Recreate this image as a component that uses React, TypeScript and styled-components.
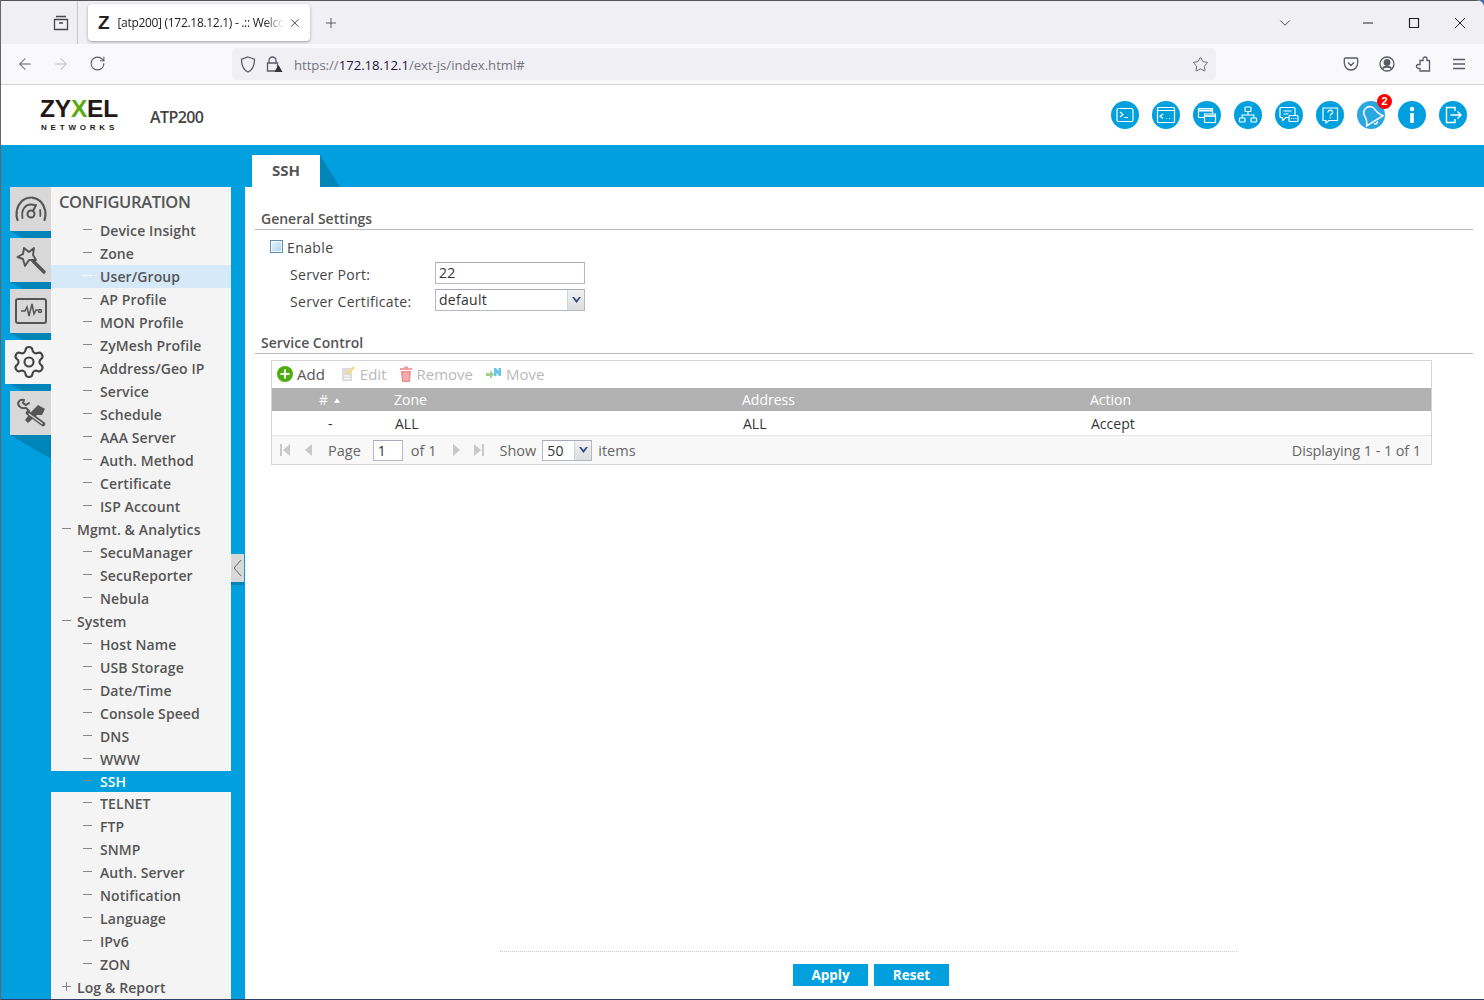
import React from 'react';
import styled, { createGlobalStyle } from 'styled-components';
import { ArrowLeft, ArrowRight, ChevronDown, Plus, RotateCw, Settings, Star, X } from 'lucide-react';

const FONT = `"Open Sans", "Liberation Sans", sans-serif`;
const BLUE = '#00a0df';
const DARK_BLUE = '#0085b9';

const GlobalStyle = createGlobalStyle`
    html, body { margin: 0; padding: 0; background: #3f6fb8; }
    * { box-sizing: border-box; }
`;

const Window = styled.div`
    height: 1000px;
    overflow: hidden;
    display: flex;
    flex-direction: column;
    font-family: ${FONT};
    color: #555;
    background: #fff;
    border-left: 1px solid #666;
    border-bottom: 1px solid #2f3f6a;
    border-top-right-radius: 8px;
`;

const TabStrip = styled.div`
    height: 44px;
    flex: none;
    display: flex;
    align-items: center;
    background: #f0f0f4;
    border-top: 1px solid #555;
    padding-left: 50px;
    color: #45454d;
`;

const ViewButton = styled.div`
    width: 27px;
    height: 43px;
    display: flex;
    align-items: center;
    border-right: 1px solid #c8c8cc;
`;

const BrowserTab = styled.div`
    margin-left: 10px;
    width: 222px;
    height: 37px;
    background: #fff;
    border-radius: 4px;
    box-shadow: 0 1px 3px rgba(0, 0, 0, 0.35);
    display: flex;
    align-items: center;
    padding: 0 8px 0 10px;
`;

const TabFavicon = styled.span`
    width: 20px;
    font: bold 19px "Liberation Sans", sans-serif;
    color: #222;
`;

const TabTitle = styled.span`
    width: 167px;
    flex: none;
    margin-right: 4px;
    white-space: nowrap;
    overflow: hidden;
    font: 12px "Open Sans", sans-serif;
    color: #222;
    letter-spacing: -0.3px;
    mask-image: linear-gradient(to right, #000 88%, transparent);
`;

const NewTab = styled.div`
    margin-left: 13px;
    display: flex;
`;

const StripRight = styled.div`
    margin-left: auto;
    padding-right: 1px;
    display: flex;
    align-items: center;
`;

const CaretSlot = styled.div`
    width: 69px;
    display: flex;
`;

const WindowControl = styled.div`
    width: 46px;
    display: flex;
    justify-content: center;
    color: #222;
`;

const NavBar = styled.div`
    height: 41px;
    flex: none;
    display: flex;
    align-items: center;
    background: #f9f9fb;
    border-bottom: 1px solid #cfcfd4;
    color: #5b5b66;
`;

const NavButton = styled.div<{ $faint?: boolean }>`
    width: 36px;
    display: flex;
    justify-content: center;
    color: ${(p) => (p.$faint ? '#b9b9c0' : '#5b5b66')};
`;

const NavButtons = styled.div`
    display: flex;
    padding-left: 6px;
    width: 231px;
`;

const UrlBar = styled.div`
    width: 984px;
    height: 32px;
    background: #f0f0f4;
    border-radius: 4px;
    display: flex;
    align-items: center;
    padding: 0 7px 0 8px;
    gap: 10px;
`;

const UrlText = styled.span`
    flex: 1;
    margin-left: 1px;
    padding-top: 1px;
    font: 13.1px "Open Sans", sans-serif;
    color: #74747e;
    b {
        font-weight: 400;
        color: #20123a;
    }
`;

const NavRight = styled.div`
    display: flex;
    margin-left: 127px;
    gap: 20px;
`;

const PageHeader = styled.header`
    height: 60px;
    flex: none;
    display: flex;
    align-items: center;
    background: #fff;
    padding: 0 17px 0 39px;
`;

const Logo = styled.div`
    width: 110px;
    display: flex;
    flex-direction: column;
`;

const LogoName = styled.div`
    font: bold 24.5px/24px "Liberation Sans", sans-serif;
    color: #231815;
    letter-spacing: -0.2px;
    span {
        color: #5aaa14;
    }
`;

const LogoSub = styled.div`
    font: bold 8px/10px "Liberation Sans", sans-serif;
    color: #231815;
    letter-spacing: 3.8px;
    margin: 2px 0 0 1px;
`;

const Model = styled.div`
    font-size: 16px;
    font-weight: 600;
    color: #444;
    margin-top: 3px;
    letter-spacing: -0.6px;
`;

const HeaderIcons = styled.div`
    margin-left: auto;
    display: flex;
    gap: 13px;
`;

const IconCircle = styled.div<{ $soft?: boolean }>`
    position: relative;
    width: 28px;
    height: 28px;
    border-radius: 50%;
    background: ${(p) => (p.$soft ? '#2aa7e0' : BLUE)};
    color: #fff;
    display: flex;
    align-items: center;
    justify-content: center;
`;

const Badge = styled.span`
    position: absolute;
    top: -7px;
    right: -7px;
    width: 15px;
    height: 15px;
    border-radius: 50%;
    background: #f00;
    color: #fff;
    font: bold 11px/15px "Liberation Sans", sans-serif;
    text-align: center;
`;

const Band = styled.div`
    height: 42px;
    flex: none;
    background: ${BLUE};
    display: flex;
    align-items: flex-end;
    padding-left: 251px;
`;

const PageTab = styled.div`
    width: 68px;
    height: 32px;
    padding-bottom: 2px;
    background: #fff;
    display: flex;
    align-items: center;
    justify-content: center;
    font-size: 15px;
    font-weight: 700;
    color: #555;
`;

const PageTabFold = styled.div`
    width: 20px;
    height: 32px;
    background: ${DARK_BLUE};
    clip-path: polygon(0 0, 100% 100%, 0 100%);
`;

const Body = styled.div`
    flex: 1;
    min-height: 0;
    display: flex;
`;

const Sidebar = styled.aside`
    position: relative;
    width: 244px;
    flex: none;
    background: ${BLUE};
    display: flex;
    padding-right: 14px;
`;

const Rail = styled.div`
    width: 50px;
    flex: none;
    display: flex;
    flex-direction: column;
    align-items: flex-end;
`;

const RailBox = styled.div<{ $active?: boolean }>`
    width: ${(p) => (p.$active ? '46px' : '41px')};
    height: 44px;
    padding-left: ${(p) => (p.$active ? '2px' : '0')};
    background: ${(p) => (p.$active ? '#f4f4f4' : '#d8d8d8')};
    display: flex;
    align-items: center;
    justify-content: center;
    color: #555;
`;

const RailFold = styled.div<{ $long?: boolean }>`
    width: 41px;
    height: ${(p) => (p.$long ? '24px' : '7px')};
    background: ${DARK_BLUE};
    clip-path: ${(p) =>
        p.$long ? 'polygon(0 0, 100% 0, 100% 100%)' : 'polygon(0 0, 100% 0, 100% 100%, 30% 100%)'};
`;

const Tree = styled.nav`
    flex: 1;
    background: #f4f4f4;
    overflow: hidden;
`;

const TreeTitle = styled.div`
    height: 32px;
    padding: 5px 0 0 8px;
    font-size: 16.5px;
    line-height: 20px;
    font-weight: 600;
    color: #555;
    letter-spacing: -0.35px;
`;

const TreeRow = styled.div<{ $top?: boolean; $state?: string }>`
    height: ${(p) => (p.$state === 'selected' ? '21px' : '23px')};
    display: flex;
    align-items: center;
    padding-left: ${(p) => (p.$top ? '11px' : '32px')};
    gap: ${(p) => (p.$top ? '6px' : '8px')};
    font-size: 14px;
    font-weight: 600;
    letter-spacing: 0.1px;
    white-space: nowrap;
    color: ${(p) => (p.$state === 'selected' ? '#fff' : '#555')};
    background: ${(p) =>
        p.$state === 'selected' ? BLUE : p.$state === 'hover' ? '#d5e9f8' : 'transparent'};
`;

const Dash = styled.span<{ $plus?: boolean; $light?: boolean }>`
    position: relative;
    width: 9px;
    height: 1px;
    margin-top: -3px;
    background: ${(p) => (p.$light ? '#fff' : '#888')};
    &::after {
        content: '';
        display: ${(p) => (p.$plus ? 'block' : 'none')};
        position: absolute;
        left: 4px;
        top: -4px;
        width: 1px;
        height: 9px;
        background: #888;
    }
`;

const Collapse = styled.div`
    position: absolute;
    left: 230px;
    top: 367px;
    width: 13px;
    height: 28px;
    background: #d8d8d8;
    display: flex;
    align-items: center;
    justify-content: center;
    color: #666;
    box-shadow: 0 3px 0 ${DARK_BLUE};
`;

const Main = styled.main`
    flex: 1;
    min-width: 0;
    display: flex;
    flex-direction: column;
    background: #fff;
    padding: 23px 11px 0 10px;
`;

const SectionTitle = styled.div`
    height: 20px;
    padding-left: 6px;
    border-bottom: 1px solid #b9b9b9;
    font-size: 14px;
    line-height: 18px;
    font-weight: 600;
    color: #555;
    flex: none;
`;

const Form = styled.div`
    height: 104px;
    flex: none;
    padding: 9px 0 0 15px;
    display: flex;
    flex-direction: column;
`;

const EnableRow = styled.label`
    height: 17px;
    display: flex;
    align-items: center;
    gap: 4px;
    font-size: 14px;
    letter-spacing: 0.4px;
    color: #444;
`;

const CheckBox = styled.span`
    width: 13px;
    height: 13px;
    margin-top: -2px;
    border: 1px solid #5b8fb5;
    background: linear-gradient(135deg, #eaf4fc, #a9d2ef);
    box-shadow: inset 0 0 0 1px #fff;
`;

const FieldRow = styled.div<{ $gap: number }>`
    display: flex;
    align-items: center;
    padding-left: 20px;
    margin-top: ${(p) => p.$gap}px;
    font-size: 14px;
    color: #444;
`;

const FieldLabel = styled.span`
    width: 145px;
    padding-top: 2px;
    letter-spacing: 0.3px;
`;

const TextField = styled.div`
    width: 150px;
    height: 22px;
    border: 1px solid #b5b8c8;
    border-top-color: #a8abbc;
    padding: 0 3px;
    font-size: 14px;
    line-height: 19px;
    letter-spacing: 0.3px;
    color: #333;
    background: #fff;
`;

const SelectField = styled(TextField)`
    display: flex;
    padding-right: 0;
    justify-content: space-between;
`;

const SelectArrow = styled.span`
    width: 17px;
    height: 100%;
    flex: none;
    background: linear-gradient(#f2f2f2, #dcdcdc);
    border-left: 1px solid #cfd2dc;
    display: flex;
    align-items: center;
    justify-content: center;
    color: #2a4b80;
`;

const GridPanel = styled.section`
    margin: 6px 0 0 16px;
    width: 1161px;
    height: 105px;
    border: 1px solid #d4d4d4;
    display: flex;
    flex-direction: column;
    flex: none;
`;

const GridToolbar = styled.div`
    height: 27px;
    padding: 0 0 2px 5px;
    display: flex;
    align-items: center;
    font-size: 15px;
    flex: none;
`;

const ToolButton = styled.span<{ $off?: boolean; $after?: number }>`
    display: flex;
    align-items: center;
    gap: 4px;
    margin-right: ${(p) => p.$after ?? 0}px;
    color: ${(p) => (p.$off ? '#b9b9b9' : '#555')};
`;

const GridRow = styled.div`
    display: grid;
    grid-template-columns: 114px 348px 348px 1fr;
    align-items: center;
    flex: none;
`;

const GridHead = styled(GridRow)`
    height: 23px;
    background: #b2b2b2;
    color: #fff;
    font-size: 14px;
`;

const GridBody = styled(GridRow)`
    height: 25px;
    color: #333;
    font-size: 14px;
    border-bottom: 1px solid #e6e6e6;
`;

const Cell = styled.span<{ $indent: number }>`
    padding-left: ${(p) => p.$indent}px;
`;

const SortMark = styled.span`
    display: inline-block;
    margin-left: 6px;
    vertical-align: 2px;
    border-left: 3.5px solid transparent;
    border-right: 3.5px solid transparent;
    border-bottom: 5px solid #fff;
`;

const Pager = styled.div`
    flex: 1;
    display: flex;
    align-items: center;
    background: #f8f8f8;
    padding: 0 10px 0 7px;
    font-size: 14.5px;
    color: #666;
`;

const PagerIcon = styled.span<{ $gap: number }>`
    display: flex;
    margin-left: ${(p) => p.$gap}px;
    color: #c8c8c8;
`;

const PagerText = styled.span<{ $gap: number }>`
    margin-left: ${(p) => p.$gap}px;
`;

const PageInput = styled(TextField)<{ $width: number }>`
    width: ${(p) => p.$width}px;
    height: 21px;
    margin-left: 12px;
    padding: 0 4px;
`;

const ShowSelect = styled(PageInput)`
    display: flex;
    justify-content: space-between;
    padding-right: 0;
    margin-left: 6px;
`;

const Displaying = styled.span`
    margin-left: auto;
    letter-spacing: -0.1px;
`;

const Spacer = styled.div`
    flex: 1;
`;

const FormFooter = styled.footer`
    flex: none;
    width: 737px;
    margin-left: 245px;
    height: 48px;
    border-top: 1px dotted #ccc;
    display: flex;
    justify-content: center;
    gap: 6px;
    padding: 12px 0 0 5px;
`;

const FooterButton = styled.button`
    width: 75px;
    height: 22px;
    border: 0;
    padding: 0;
    background: ${BLUE};
    color: #fff;
    font-family: ${FONT};
    font-size: 13.5px;
    font-weight: 700;
`;

const Line = (props: React.SVGProps<SVGSVGElement> & { s?: number }) => {
    const { s = 20, children, ...rest } = props;
    return (
        <svg width={s} height={s} viewBox="0 0 20 20" fill="none" stroke="currentColor" strokeWidth={1.2} {...rest}>
            {children}
        </svg>
    );
};

const headerIcons = [
    <Line key="cli">
        <rect x="2" y="3.5" width="16" height="13" rx="1.5" />
        <path d="M5 7l3 2.5L5 12M9 12.5h4" />
    </Line>,
    <Line key="console">
        <rect x="1.5" y="2.5" width="17" height="15" rx="1" />
        <path d="M1.5 5.5h17M7 9l-3 2.2L7 13.5M10 13.5h.8M13 13.5h.8" />
    </Line>,
    <Line key="windows">
        <path d="M1.500 3.500h14v9h-14z" />
        <path d="M1.500 5.500h14" strokeWidth="2" />
        <path d="M7.500 9h11v8.500h-11z" fill={BLUE} />
        <path d="M7.500 11h11" strokeWidth="1.600" />
    </Line>,
    <Line key="tree">
        <rect x="7" y="2" width="6" height="4.5" rx="0.8" />
        <rect x="1.5" y="13" width="5.5" height="4" rx="0.8" />
        <rect x="13" y="13" width="5.5" height="4" rx="0.8" />
        <path d="M10 6.5V10M4.2 13v-3h11.6v3" />
    </Line>,
    <Line key="chat">
        <path d="M2 2.500h13q1 0 1 1v8q0 1-1 1H7L3.500 15.500v-3H2q-1 0-1-1v-8q0-1 1-1zM4.500 6h8M4.500 9h5" />
        <rect x="10" y="10.5" width="9" height="6" rx="1" fill={BLUE} />
        <path d="M12 13.500h1M14.200 13.500h1M16.400 13.500h1" />
    </Line>,
    <Line key="help">
        <path d="M3 3h14.5v12.5H9L6 18v-2.5H3z" />
        <path d="M8 7.5c0-3 4.6-3 4.6-.3 0 1.800-2.300 1.800-2.300 3.500M10.300 12v1.200" />
    </Line>,
    <Line key="bell" s={25}>
        <g transform="rotate(-32 10 10)">
            <path d="M10 2.500a4.800 4.800 0 0 0-4.800 4.800c0 4.700-1.600 5.700-2.900 7.700h15.400c-1.300-2-2.900-3-2.900-7.700A4.800 4.800 0 0 0 10 2.500z" />
            <path d="M8.500 16.500a1.600 1.600 0 0 0 3 0" />
        </g>
    </Line>,
    <svg key="info" width="20" height="20" viewBox="0 0 20 20" fill="#fff">
        <circle cx="10" cy="4" r="2.200" />
        <path d="M8.200 8h3.600v10H8.200z" />
    </svg>,
    <Line key="logout" strokeWidth={1.4}>
        <path d="M12 6V2.500H3.500v15H12V14M7.500 10H18M14.500 6.500L18 10l-3.500 3.500" />
    </Line>,
];

const treeItems: { label: string; top?: boolean; state?: string; plus?: boolean }[] = [
    { label: 'Device Insight' },
    { label: 'Zone' },
    { label: 'User/Group', state: 'hover' },
    { label: 'AP Profile' },
    { label: 'MON Profile' },
    { label: 'ZyMesh Profile' },
    { label: 'Address/Geo IP' },
    { label: 'Service' },
    { label: 'Schedule' },
    { label: 'AAA Server' },
    { label: 'Auth. Method' },
    { label: 'Certificate' },
    { label: 'ISP Account' },
    { label: 'Mgmt. & Analytics', top: true },
    { label: 'SecuManager' },
    { label: 'SecuReporter' },
    { label: 'Nebula' },
    { label: 'System', top: true },
    { label: 'Host Name' },
    { label: 'USB Storage' },
    { label: 'Date/Time' },
    { label: 'Console Speed' },
    { label: 'DNS' },
    { label: 'WWW' },
    { label: 'SSH', state: 'selected' },
    { label: 'TELNET' },
    { label: 'FTP' },
    { label: 'SNMP' },
    { label: 'Auth. Server' },
    { label: 'Notification' },
    { label: 'Language' },
    { label: 'IPv6' },
    { label: 'ZON' },
    { label: 'Log & Report', top: true, plus: true },
];

const railIcons = [
    <svg key="gauge" width="34" height="28" viewBox="0 0 34 28" fill="none" stroke="#555" strokeWidth="2.200" strokeLinecap="round">
        <path d="M3.500 25C0 15 6 2.500 17 2.500S34 15 30.500 25" strokeDasharray="9 1.500" />
        <path d="M8.500 23C7 15 11 9.500 17 9.500c1.500 0 3 .3 4 1" strokeWidth="1.800" />
        <circle cx="17" cy="19" r="3.500" strokeWidth="2" />
        <path d="M19 16l3-6" strokeWidth="2" />
        <path d="M26 15c.5 2 .5 4 .3 6" strokeWidth="1.800" />
    </svg>,
    <svg key="wand" width="30" height="30" viewBox="0 0 30 30" fill="none" stroke="#555" strokeWidth="1.900" strokeLinejoin="round">
        <path d="M18 3l-1 7 3 5h-7l-4 6-2-7-5.500-2L7 9l1-6 5 4z" />
        <path d="M17 16l11 11" strokeWidth="3.500" strokeLinecap="round" />
    </svg>,
    <svg key="pulse" width="32" height="26" viewBox="0 0 32 26" fill="none" stroke="#555" strokeWidth="2">
        <rect x="1" y="1" width="30" height="24" rx="2" />
        <path d="M6 13h4l2-4 2 9 3-12 2 10 2-4h2" strokeWidth="1.500" />
        <circle cx="25" cy="13" r="1.500" strokeWidth="1.500" />
    </svg>,
    <Settings key="gear" size={36} strokeWidth={1.4} color="#444" />,
    <svg key="tools" width="30" height="32" viewBox="0 0 30 32" fill="none" stroke="#555" strokeWidth="2" strokeLinecap="round">
        <path d="M8 3C3 2 1 6 3 9c2 3 6 2 7 2l3 3M8 3L7 6l3 2 3-2" />
        <path d="M16 14l6-6 7 4-3 6h-5l-9 8-3-3z" fill="#555" stroke="none" />
        <path d="M12 16l15 11" strokeWidth="4.500" />
        <path d="M13 17l13 9.500" strokeWidth="1.400" stroke="#d8d8d8" />
    </svg>,
];

const ToolIcon = ({ kind }: { kind: string }) => {
    if (kind === 'add') {
        return (
            <svg width="16" height="16" viewBox="0 0 16 16">
                <circle cx="8" cy="8" r="8" fill="#4fae0f" />
                <path d="M7 3.500h2V7h3.500v2H9v3.500H7V9H3.500V7H7z" fill="#fff" />
            </svg>
        );
    }
    if (kind === 'edit') {
        return (
            <svg width="15" height="16" viewBox="0 0 15 16">
                <path d="M1 2h10v13H1z" fill="#ddd" />
                <path d="M3 10h6M3 12.500h6" stroke="#fff" />
                <path d="M5 9l1 -3 6-6 2 2-6 6z" fill="#f3dc8c" />
            </svg>
        );
    }
    if (kind === 'remove') {
        return (
            <svg width="14" height="16" viewBox="0 0 14 16">
                <path d="M1 2h12v2H1zM5 0.500h4V2H5z" fill="#f2a0a0" />
                <path d="M2 5h10l-1 11H3z" fill="#ee8f90" />
                <path d="M5 6.500v8M7 6.500v8M9 6.500v8" stroke="#f8c8c8" />
            </svg>
        );
    }
    return (
        <svg width="16" height="14" viewBox="0 0 16 14">
            <path d="M0 6h4V3l4 4.500L4 12V9H0z" fill="#9bd48a" />
            <path d="M8 1h2l2.500 3V1H15v8h-2l-2.500-3v3H8z" fill="#6bc5ef" />
        </svg>
    );
};

const PagerGlyph = ({ kind }: { kind: string }) => (
    <svg width="13" height="14" viewBox="0 0 13 14" fill="currentColor">
        {kind === 'first' && <path d="M1 1h2v12H1zM11 1v12L4 7z" />}
        {kind === 'prev' && <path d="M10 1v12L3 7z" />}
        {kind === 'next' && <path d="M3 1v12l7-6z" />}
        {kind === 'last' && <path d="M10 1h2v12h-2zM2 1v12l7-6z" />}
    </svg>
);

const SelectCaret = () => (
    <svg width="9" height="6" viewBox="0 0 9 6" fill="currentColor">
        <path d="M0 0l2 0 2.500 3L7 0l2 0-4.500 6z" />
    </svg>
);

export default function App() {
    return (
        <Window>
            <GlobalStyle />
            <TabStrip>
                <ViewButton>
                    <svg width="20" height="20" viewBox="0 0 20 20" fill="none" stroke="currentColor" strokeWidth="1.300">
                        <path d="M5 3.500h10M3.500 6.500h13v10h-13zM8 10h4" />
                    </svg>
                </ViewButton>
                <BrowserTab>
                    <TabFavicon>Z</TabFavicon>
                    <TabTitle>[atp200] (172.18.12.1) - .:: Welcome</TabTitle>
                    <X size={14} color="#222" strokeWidth={1.4} />
                </BrowserTab>
                <NewTab>
                    <Plus size={16} strokeWidth={1.3} />
                </NewTab>
                <StripRight>
                    <CaretSlot>
                        <ChevronDown size={18} strokeWidth={1.3} />
                    </CaretSlot>
                    <WindowControl>
                        <svg width="12" height="12" viewBox="0 0 12 12" stroke="currentColor" strokeWidth="1.100">
                            <path d="M1 6h10" />
                        </svg>
                    </WindowControl>
                    <WindowControl>
                        <svg width="12" height="12" viewBox="0 0 12 12" fill="none" stroke="currentColor" strokeWidth="1.200">
                            <path d="M1.500 1.500h9v9h-9z" />
                        </svg>
                    </WindowControl>
                    <WindowControl>
                        <svg width="12" height="12" viewBox="0 0 12 12" stroke="currentColor">
                            <path d="M1 1l10 10M11 1L1 11" />
                        </svg>
                    </WindowControl>
                </StripRight>
            </TabStrip>
            <NavBar>
                <NavButtons>
                    <NavButton>
                        <ArrowLeft size={18} strokeWidth={1.4} />
                    </NavButton>
                    <NavButton $faint>
                        <ArrowRight size={18} strokeWidth={1.4} />
                    </NavButton>
                    <NavButton>
                        <RotateCw size={17} strokeWidth={1.5} />
                    </NavButton>
                </NavButtons>
                <UrlBar>
                    <svg width="16" height="17" viewBox="0 0 16 17" fill="none" stroke="currentColor" strokeWidth="1.300">
                        <path d="M8 1l6.500 2.200c0 6-1.500 10.500-6.500 12.800C3 13.700 1.500 9.200 1.500 3.200z" />
                    </svg>
                    <svg width="17" height="17" viewBox="0 0 17 17" fill="none" stroke="currentColor" strokeWidth="1.300">
                        <path d="M3 7V4.500a3.500 3.500 0 0 1 7 0V7M1.500 7h10v8h-10z" />
                        <path d="M12.500 9l4 7h-8z" fill="#333" stroke="none" />
                    </svg>
                    <UrlText>
                        https://<b>172.18.12.1</b>/ext-js/index.html#
                    </UrlText>
                    <Star size={17} strokeWidth={1.3} />
                </UrlBar>
                <NavRight>
                    <svg width="16" height="16" viewBox="0 0 16 16" fill="none" stroke="currentColor" strokeWidth="1.300">
                        <path d="M2.500 2h11c.800 0 1.200.500 1.200 1.200V7c0 4-3 7-6.700 7s-6.700-3-6.700-7V3.200C1.300 2.500 1.700 2 2.500 2zM5 6.500l3 3 3-3" />
                    </svg>
                    <svg width="16" height="16" viewBox="0 0 16 16" fill="none" stroke="currentColor" strokeWidth="1.300">
                        <circle cx="8" cy="8" r="7" />
                        <circle cx="8" cy="6.500" r="2.800" fill="currentColor" />
                        <path d="M3.500 12.500c2-2.500 7-2.500 9 0" strokeWidth="2" />
                    </svg>
                    <svg width="16" height="16" viewBox="0 0 16 16" fill="none" stroke="currentColor" strokeWidth="1.300">
                        <path d="M5 15V12.500H3.500a2 2 0 0 1 0-4H5V4.500h3V3a2 2 0 0 1 4 0v1.500h2.500V15z" />
                    </svg>
                    <svg width="16" height="16" viewBox="0 0 16 16" fill="none" stroke="currentColor" strokeWidth="1.300">
                        <path d="M2 3.500h12M2 8h12M2 12.500h12" />
                    </svg>
                </NavRight>
            </NavBar>
            <PageHeader>
                <Logo>
                    <LogoName>
                        ZY<span>X</span>EL
                    </LogoName>
                    <LogoSub>NETWORKS</LogoSub>
                </Logo>
                <Model>ATP200</Model>
                <HeaderIcons>
                    {headerIcons.map((icon, i) => (
                        <IconCircle key={i} $soft={i === 6}>
                            {icon}
                            {i === 6 && <Badge>2</Badge>}
                        </IconCircle>
                    ))}
                </HeaderIcons>
            </PageHeader>
            <Band>
                <PageTab>SSH</PageTab>
                <PageTabFold />
            </Band>
            <Body>
                <Sidebar>
                    <Rail>
                        {railIcons.map((icon, i) => (
                            <React.Fragment key={i}>
                                <RailBox $active={i === 3}>{icon}</RailBox>
                                <RailFold $long={i === 4} />
                            </React.Fragment>
                        ))}
                    </Rail>
                    <Tree>
                        <TreeTitle>CONFIGURATION</TreeTitle>
                        {treeItems.map((item) => (
                            <TreeRow key={item.label} $top={item.top} $state={item.state}>
                                <Dash $plus={item.plus} $light={item.state === 'hover'} />
                                {item.label}
                            </TreeRow>
                        ))}
                    </Tree>
                    <Collapse>
                        <svg width="9" height="18" viewBox="0 0 9 18" fill="none" stroke="currentColor">
                            <path d="M8 1L1 9l7 8" />
                        </svg>
                    </Collapse>
                </Sidebar>
                <Main>
                    <SectionTitle>General Settings</SectionTitle>
                    <Form>
                        <EnableRow>
                            <CheckBox />
                            Enable
                        </EnableRow>
                        <FieldRow $gap={6}>
                            <FieldLabel>Server Port:</FieldLabel>
                            <TextField>22</TextField>
                        </FieldRow>
                        <FieldRow $gap={5}>
                            <FieldLabel>Server Certificate:</FieldLabel>
                            <SelectField>
                                default
                                <SelectArrow>
                                    <SelectCaret />
                                </SelectArrow>
                            </SelectField>
                        </FieldRow>
                    </Form>
                    <SectionTitle>Service Control</SectionTitle>
                    <GridPanel>
                        <GridToolbar>
                            <ToolButton $after={16}>
                                <ToolIcon kind="add" />
                                Add
                            </ToolButton>
                            <ToolButton $off $after={12}>
                                <ToolIcon kind="edit" />
                                Edit
                            </ToolButton>
                            <ToolButton $off $after={13}>
                                <ToolIcon kind="remove" />
                                Remove
                            </ToolButton>
                            <ToolButton $off>
                                <ToolIcon kind="move" />
                                Move
                            </ToolButton>
                        </GridToolbar>
                        <GridHead>
                            <Cell $indent={47}>
                                #<SortMark />
                            </Cell>
                            <Cell $indent={8}>Zone</Cell>
                            <Cell $indent={8}>Address</Cell>
                            <Cell $indent={8}>Action</Cell>
                        </GridHead>
                        <GridBody>
                            <Cell $indent={56}>-</Cell>
                            <Cell $indent={9}>ALL</Cell>
                            <Cell $indent={9}>ALL</Cell>
                            <Cell $indent={9}>Accept</Cell>
                        </GridBody>
                        <Pager>
                            <PagerIcon $gap={0}>
                                <PagerGlyph kind="first" />
                            </PagerIcon>
                            <PagerIcon $gap={10}>
                                <PagerGlyph kind="prev" />
                            </PagerIcon>
                            <PagerText $gap={13}>Page</PagerText>
                            <PageInput $width={30}>1</PageInput>
                            <PagerText $gap={8}>of 1</PagerText>
                            <PagerIcon $gap={14}>
                                <PagerGlyph kind="next" />
                            </PagerIcon>
                            <PagerIcon $gap={9}>
                                <PagerGlyph kind="last" />
                            </PagerIcon>
                            <PagerText $gap={14}>Show</PagerText>
                            <ShowSelect $width={50}>
                                50
                                <SelectArrow>
                                    <SelectCaret />
                                </SelectArrow>
                            </ShowSelect>
                            <PagerText $gap={6}>items</PagerText>
                            <Displaying>Displaying 1 - 1 of 1</Displaying>
                        </Pager>
                    </GridPanel>
                    <Spacer />
                    <FormFooter>
                        <FooterButton>Apply</FooterButton>
                        <FooterButton>Reset</FooterButton>
                    </FormFooter>
                </Main>
            </Body>
        </Window>
    );
}
